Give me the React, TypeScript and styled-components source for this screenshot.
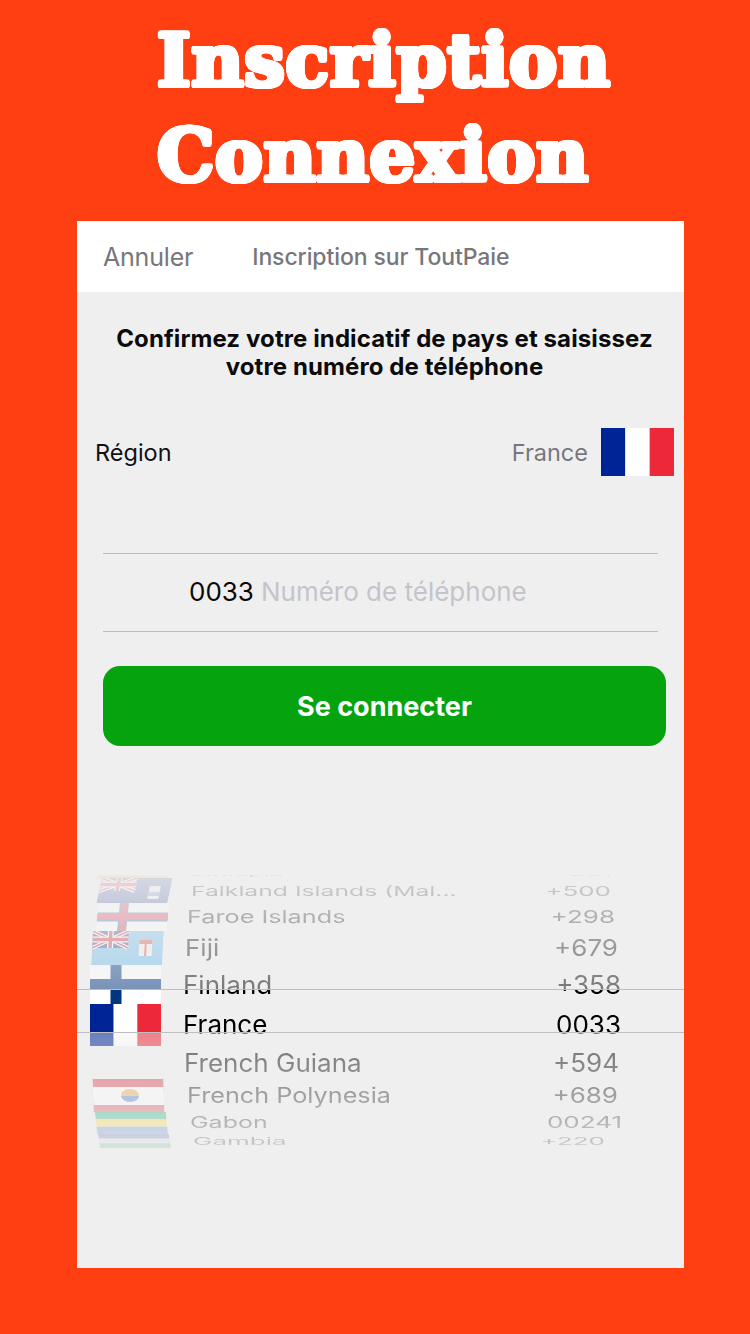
import { ReactNode } from "react";
import { createGlobalStyle, styled } from "styled-components";

const sans = `Inter, "Noto Sans", sans-serif`;

// round outline for the heavy title lettering
const heroHalo = Array.from({ length: 16 }, (_, i) => {
  const a = (i / 16) * Math.PI * 2;
  return `${(Math.cos(a) * 2.4).toFixed(2)}px ${(Math.sin(a) * 2.4).toFixed(2)}px 0 #fff`;
}).join(", ");

const GlobalStyle = createGlobalStyle`
  html, body {
    margin: 0;
    padding: 0;
    background: #ff3f12;
  }
`;

const Page = styled.div`
  width: 750px;
  height: 1334px;
  background: #ff3f12;
  overflow: hidden;
  font-family: ${sans};
`;

const Hero = styled.h1`
  margin: 0;
  height: 221px;
  box-sizing: border-box;
  padding: 13px 0 0 157px;
  font-family: "DejaVu Serif", serif;
  font-weight: 700;
  font-size: 72px;
  line-height: 95px;
  letter-spacing: 0.6px;
  color: #fff;
  text-shadow: ${heroHalo};
`;

const Panel = styled.main`
  width: 607px;
  height: 1047px;
  margin-left: 77px;
  background: #efeff0;
  display: flex;
  flex-direction: column;
`;

const NavBar = styled.header`
  height: 71px;
  flex: none;
  background: #fff;
  display: flex;
  align-items: center;
  padding-left: 26px;
  gap: 59px;
  color: #77777b;
`;

const NavAction = styled.span`
  font-size: 25px;
  letter-spacing: -0.2px;
`;

const NavTitle = styled.span`
  font-size: 23px;
  font-weight: 500;
  letter-spacing: -0.1px;
`;

const Intro = styled.h2`
  margin: 33px 0 0 8px;
  font-size: 24px;
  font-weight: 700;
  line-height: 28px;
  letter-spacing: 0.1px;
  text-align: center;
  color: #0b0b0c;
`;

const RegionRow = styled.div`
  margin-top: 47px;
  display: flex;
  align-items: center;
  padding: 0 10px 0 18px;
`;

const RegionLabel = styled.span`
  flex: 1;
  font-size: 23.5px;
  color: #111;
`;

const RegionValue = styled.span`
  font-size: 23.5px;
  color: #77777f;
  margin-right: 13px;
`;

const PhoneField = styled.div`
  margin: 77px 26px 0;
  height: 74px;
  padding: 0 0 3px 86px;
  border-top: 1px solid #bdbdbf;
  border-bottom: 1px solid #bdbdbf;
  display: flex;
  align-items: center;
  gap: 7px;
  font-size: 26px;
`;

const DialCode = styled.span`
  color: #0a0a0a;
`;

const Placeholder = styled.span`
  color: #c4c4ca;
`;

const SubmitButton = styled.button`
  margin: 34px 18px 0 26px;
  height: 80px;
  flex: none;
  border: 0;
  border-radius: 17px;
  background: #05a30d;
  color: #fff;
  font-family: ${sans};
  font-size: 27px;
  font-weight: 700;
`;

const Wheel = styled.section`
  position: relative;
  margin-top: 124px;
  height: 278px;
  overflow: hidden;
`;

const WheelRow = styled.div<{ $h: number }>`
  height: ${({ $h }) => $h}px;
  display: grid;
  grid-template-columns: 84px 1fr auto;
  grid-template-rows: minmax(0, 1fr);
  align-items: center;
  padding-left: 13px;
  color: #000;
`;

const FlagSlot = styled.div<{ $skew: number; $shift: number }>`
  width: 71px;
  height: 100%;
  transform: translateX(${({ $shift }) => $shift}px) skewX(${({ $skew }) => $skew}deg);

  svg {
    display: block;
    width: 100%;
    height: 100%;
  }
`;

const RowText = styled.span<{ $soft: number }>`
  display: block;
  height: 0;
  font-size: 26px;
  line-height: 0;
  white-space: nowrap;
  filter: blur(${({ $soft }) => $soft}px);
`;

const RowName = styled(RowText)<{ $inset: number; $squash: number; $wide: number }>`
  margin-left: ${({ $inset }) => $inset}px;
  transform: scale(${({ $wide }) => $wide}, ${({ $squash }) => $squash});
  transform-origin: left center;
`;

const RowCode = styled(RowText)<{ $end: number; $squash: number }>`
  margin-right: ${({ $end }) => $end}px;
  transform: scaleY(${({ $squash }) => $squash});
`;

const Fog = styled.div`
  position: absolute;
  left: 0;
  right: 0;
  pointer-events: none;
`;

const FogAbove = styled(Fog)`
  top: 0;
  height: 119px;
  background: linear-gradient(#efeff0 0, #efeff0 5px, rgba(239, 239, 240, 0.88) 6px, rgba(239, 239, 240, 0.5));
  border-bottom: 1px solid #bfbfc1;
`;

const FogBelow = styled(Fog)`
  top: 162px;
  bottom: 0;
  background: linear-gradient(rgba(239, 239, 240, 0.45), rgba(239, 239, 240, 0.85));
  border-top: 1px solid #bfbfc1;
`;

const Stripes = ({ colors }: { colors: string[] }) => (
  <svg viewBox={`0 0 ${colors.length} ${colors.length}`} preserveAspectRatio="none">
    {colors.map((c, i) => (
      <rect key={i} x="0" y={i} width={colors.length} height="1.02" fill={c} />
    ))}
  </svg>
);

const UnionJack = ({ w, h }: { w: number; h: number }) => (
  <g>
    <rect width={w} height={h} fill="#1f3d8a" />
    <path d={`M0 0L${w} ${h}M${w} 0L0 ${h}`} stroke="#fff" strokeWidth="4" />
    <path d={`M0 0L${w} ${h}M${w} 0L0 ${h}`} stroke="#d2243a" strokeWidth="1.5" />
    <path d={`M${w / 2} 0V${h}M0 ${h / 2}H${w}`} stroke="#fff" strokeWidth="6" />
    <path d={`M${w / 2} 0V${h}M0 ${h / 2}H${w}`} stroke="#d2243a" strokeWidth="3.5" />
  </g>
);

const flags: Record<string, ReactNode> = {
  ethiopia: <Stripes colors={["#e8b820", "#e8b820"]} />,
  falkland: (
    <svg viewBox="0 0 71 25" preserveAspectRatio="none">
      <rect width="71" height="25" fill="#2a3f90" />
      <UnionJack w={36} h={13} />
      <rect x="50" y="8" width="11" height="13" fill="#e9edf2" />
      <rect x="50" y="14" width="11" height="4" fill="#5a83b8" />
    </svg>
  ),
  faroe: (
    <svg viewBox="0 0 71 28" preserveAspectRatio="none">
      <rect width="71" height="28" fill="#fff" />
      <path d="M26 0V28M0 14H71" stroke="#1f5fa8" strokeWidth="9" />
      <path d="M26 0V28M0 14H71" stroke="#d9263c" strokeWidth="6" />
    </svg>
  ),
  fiji: (
    <svg viewBox="0 0 71 34" preserveAspectRatio="none">
      <rect width="71" height="34" fill="#6ab8e8" />
      <UnionJack w={36} h={17} />
      <rect x="47" y="9" width="13" height="16" fill="#f3efe6" />
      <rect x="47" y="9" width="13" height="4" fill="#d9463a" />
      <path d="M53.5 13V25" stroke="#d9463a" strokeWidth="2" />
    </svg>
  ),
  finland: (
    <svg viewBox="0 0 71 39" preserveAspectRatio="none">
      <rect width="71" height="39" fill="#fff" />
      <path d="M26 0V39M0 19.5H71" stroke="#003580" strokeWidth="11" />
    </svg>
  ),
  france: (
    <svg viewBox="0 0 3 2" preserveAspectRatio="none">
      <rect width="1" height="2" fill="#002395" />
      <rect x="1" width="1" height="2" fill="#fff" />
      <rect x="2" width="1" height="2" fill="#ed2939" />
    </svg>
  ),
  polynesia: (
    <svg viewBox="0 0 71 33" preserveAspectRatio="none">
      <rect width="71" height="33" fill="#d8303c" />
      <rect y="8" width="71" height="18" fill="#fff" />
      <ellipse cx="37" cy="16" rx="9" ry="6" fill="#e8a030" />
      <path d="M28 17H46A9 6 0 0 1 28 17Z" fill="#3a6ab8" />
    </svg>
  ),
  gabon: <Stripes colors={["#009e60", "#fcd116", "#3a75c4"]} />,
  gambia: <Stripes colors={["#3a4a9a", "#c9d2dc", "#3a9a60"]} />,
};

const rows = [
  { h: 8, flag: "ethiopia", skew: -14, shift: 8, name: "Ethiopia", code: "+251", squash: 0.22, wide: 0.95, inset: 16, end: 72, soft: 0.5 },
  { h: 25, flag: "falkland", skew: -12, shift: 9, name: "Falkland Islands (Mal...", code: "+500", squash: 0.52, wide: 0.95, inset: 17, end: 73, soft: 0.4 },
  { h: 28, flag: "faroe", skew: -6, shift: 7, name: "Faroe Islands", code: "+298", squash: 0.68, wide: 0.97, inset: 13, end: 69, soft: 0.3 },
  { h: 34, flag: "fiji", skew: -3, shift: 2, name: "Fiji", code: "+679", squash: 0.88, wide: 1, inset: 11, end: 66, soft: 0.2 },
  { h: 39, flag: "finland", skew: 0, shift: 0, name: "Finland", code: "+358", squash: 0.96, wide: 1, inset: 9, end: 63, soft: 0 },
  { h: 42, flag: "france", skew: 0, shift: 0, name: "France", code: "0033", squash: 1, wide: 1, inset: 9, end: 63, soft: 0 },
  { h: 33, flag: "", skew: 0, shift: 0, name: "French Guiana", code: "+594", squash: 0.96, wide: 1, inset: 10, end: 65, soft: 0.1 },
  { h: 33, flag: "polynesia", skew: 2, shift: 3, name: "French Polynesia", code: "+689", squash: 0.82, wide: 0.97, inset: 13, end: 66, soft: 0.2 },
  { h: 22, flag: "gabon", skew: 6, shift: 6, name: "Gabon", code: "00241", squash: 0.6, wide: 0.96, inset: 16, end: 62, soft: 0.3 },
  { h: 14, flag: "gambia", skew: 9, shift: 9, name: "Gambia", code: "+220", squash: 0.4, wide: 1, inset: 19, end: 79, soft: 0.5 },
];

const RegionFlag = styled.div`
  width: 73px;
  height: 48px;
  flex: none;

  svg {
    display: block;
    width: 100%;
    height: 100%;
  }
`;

export default function App() {
  return (
    <Page>
      <GlobalStyle />
      <Hero>
        Inscription
        <br />
        Connexion
      </Hero>
      <Panel>
        <NavBar>
          <NavAction>Annuler</NavAction>
          <NavTitle>Inscription sur ToutPaie</NavTitle>
        </NavBar>
        <Intro>
          Confirmez votre indicatif de pays et saisissez
          <br />
          votre numéro de téléphone
        </Intro>
        <RegionRow>
          <RegionLabel>Région</RegionLabel>
          <RegionValue>France</RegionValue>
          <RegionFlag>{flags.france}</RegionFlag>
        </RegionRow>
        <PhoneField>
          <DialCode>0033</DialCode>
          <Placeholder>Numéro de téléphone</Placeholder>
        </PhoneField>
        <SubmitButton>Se connecter</SubmitButton>
        <Wheel>
          {rows.map((r) => (
            <WheelRow key={r.name} $h={r.h}>
              <FlagSlot $skew={r.skew} $shift={r.shift}>
                {flags[r.flag]}
              </FlagSlot>
              <RowName $squash={r.squash} $wide={r.wide} $soft={r.soft} $inset={r.inset}>
                {r.name}
              </RowName>
              <RowCode $squash={r.squash} $soft={r.soft} $end={r.end}>
                {r.code}
              </RowCode>
            </WheelRow>
          ))}
          <FogAbove />
          <FogBelow />
        </Wheel>
      </Panel>
    </Page>
  );
}
